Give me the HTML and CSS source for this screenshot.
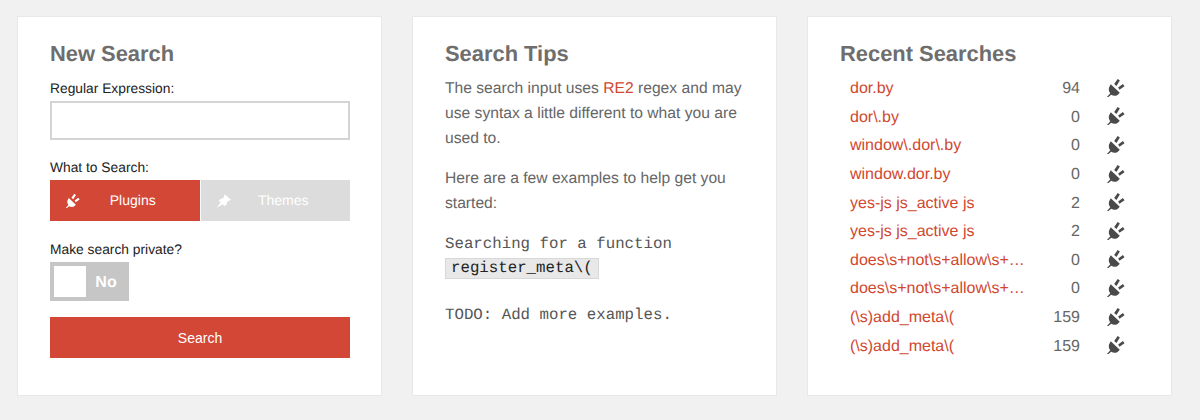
FILE: index.html
```html
<!DOCTYPE html>
<html lang="en">
<head>
  <meta charset="UTF-8">
  <title>Search</title>
  <link rel="stylesheet" href="styles.css">
</head>
<body>
  <svg class="icon-defs" width="0" height="0">
    <symbol id="plug" viewBox="0 0 20 20">
      <path d="M1 20l3.500-4c-2-2.500-2-5.500-.5-7.500l1-2 9.500 9-1.500 1.500c-2 2-5 2-7.500.5l-3.500 3z"/>
      <path d="M8.600 6.300l3.700-5.300 2.300 1.700-3.600 5.600zM12.800 10l5-3.600 1.700 2.300-5.300 3.700z"/>
    </symbol>
    <symbol id="pin" viewBox="0 0 20 20">
      <path d="M1 19.500l5-7-2.500-2.500 2.500-2 4-1.500 1.500-5 8.500 7.500-5 2.500-1 3.500-2.500 2.500-2.500-2.500z"/>
    </symbol>
  </svg>

  <div class="page">
    <!-- New search form -->
    <div class="card">
      <div class="title">New Search</div>
      <form>
        <label class="field-label" for="regex">Regular Expression:</label>
        <input class="text-input" type="text" id="regex">

        <div class="field-label what-label">What to Search:</div>
        <div class="tabs">
          <div class="tab tab-active">
            <svg class="tab-icon"><use href="#plug"/></svg>
            <span>Plugins</span>
          </div>
          <div class="tab">
            <svg class="tab-icon"><use href="#pin"/></svg>
            <span>Themes</span>
          </div>
        </div>

        <div class="field-label private-label">Make search private?</div>
        <div class="toggle">
          <div class="toggle-knob"></div>
          <div class="toggle-text">No</div>
        </div>

        <button class="search-btn" type="button">Search</button>
      </form>
    </div>

    <!-- Tips -->
    <div class="card">
      <div class="title">Search Tips</div>
      <p class="tip">The search input uses <a href="#">RE2</a> regex and may use syntax a little different to what you are used to.</p>
      <p class="tip">Here are a few examples to help get you started:</p>
      <div class="mono-block">Searching for a function<br><code>register_meta\(</code></div>
      <div class="mono-block todo">TODO: Add more examples.</div>
    </div>

    <!-- Recent searches -->
    <div class="card">
      <div class="title">Recent Searches</div>
      <div class="recent-list">
        <div class="recent-row"><a href="#">dor.by</a><span class="count">94</span><svg class="row-icon"><use href="#plug"/></svg></div>
        <div class="recent-row"><a href="#">dor\.by</a><span class="count">0</span><svg class="row-icon"><use href="#plug"/></svg></div>
        <div class="recent-row"><a href="#">window\.dor\.by</a><span class="count">0</span><svg class="row-icon"><use href="#plug"/></svg></div>
        <div class="recent-row"><a href="#">window.dor.by</a><span class="count">0</span><svg class="row-icon"><use href="#plug"/></svg></div>
        <div class="recent-row"><a href="#">yes-js js_active js</a><span class="count">2</span><svg class="row-icon"><use href="#plug"/></svg></div>
        <div class="recent-row"><a href="#">yes-js js_active js</a><span class="count">2</span><svg class="row-icon"><use href="#plug"/></svg></div>
        <div class="recent-row"><a href="#">does\s+not\s+allow\s+access</a><span class="count">0</span><svg class="row-icon"><use href="#plug"/></svg></div>
        <div class="recent-row"><a href="#">does\s+not\s+allow\s+access</a><span class="count">0</span><svg class="row-icon"><use href="#plug"/></svg></div>
        <div class="recent-row"><a href="#">(\s)add_meta\(</a><span class="count">159</span><svg class="row-icon"><use href="#plug"/></svg></div>
        <div class="recent-row"><a href="#">(\s)add_meta\(</a><span class="count">159</span><svg class="row-icon"><use href="#plug"/></svg></div>
      </div>
    </div>
  </div>
</body>
</html>
```

FILE: styles.css
```css
/* General layout */
html, body {
  margin: 0;
  padding: 0;
  height: 100%;
  overflow: hidden;
  background-color: #f1f1f1;
  font-family: "Liberation Sans", Arial, sans-serif;
  text-rendering: geometricPrecision;
  color: #666;
}

.icon-defs {
  position: absolute;
}

.page {
  display: grid;
  grid-template-columns: repeat(3, 365px);
  gap: 30px;
  padding: 16px 0 0 17px;
}

.card {
  box-sizing: border-box;
  height: 380px;
  padding: 23px 31px 0 32px;
  background-color: #fff;
  border: 1px solid #e8e8e8;
}

.title {
  font-size: 21.9px;
  line-height: 28px;
  font-weight: bold;
  color: #6e6e6e;
}

a {
  color: #d1472f;
  text-decoration: none;
}

/* Form */
.field-label {
  display: block;
  font-size: 13.8px;
  line-height: 18px;
  color: #222;
}

form .field-label:first-child {
  margin-top: 12px;
}

.text-input {
  display: block;
  box-sizing: border-box;
  width: 300px;
  height: 39px;
  margin-top: 3px;
  border: 2px solid #d4d4d4;
  background: #fff;
}

.what-label {
  margin-top: 19px;
}

.tabs {
  display: flex;
  gap: 1px;
  margin-top: 3px;
}

.tab {
  position: relative;
  flex: 1;
  box-sizing: border-box;
  height: 41px;
  padding: 0 0 2px 16px;
  display: flex;
  align-items: center;
  justify-content: center;
  background-color: #dcdcdc;
  color: #fff;
  font-size: 14px;
}

.tab-active {
  background-color: #d24735;
}

.tab-icon {
  position: absolute;
  left: 15px;
  top: 13px;
  width: 15px;
  height: 15px;
  fill: #fff;
}

.private-label {
  margin-top: 20px;
}

.toggle {
  display: flex;
  align-items: center;
  box-sizing: border-box;
  width: 79px;
  height: 39px;
  margin-top: 3px;
  padding: 4px;
  background-color: #c6c6c6;
}

.toggle-knob {
  width: 32px;
  height: 31px;
  background-color: #fff;
}

.toggle-text {
  flex: 1;
  padding: 2px 0 0 1px;
  text-align: center;
  font-size: 16px;
  font-weight: bold;
  color: #fff;
}

.search-btn {
  display: block;
  width: 300px;
  height: 41px;
  margin-top: 16px;
  border: none;
  background-color: #d24735;
  color: #fff;
  font-family: inherit;
  font-size: 14px;
}

/* Tips */
.tip {
  margin: 8px 0 0;
  font-size: 15.65px;
  line-height: 25px;
  color: #666;
}

.tip + .tip {
  margin-top: 15px;
}

.mono-block {
  margin-top: 16px;
  font-family: "Liberation Mono", "Courier New", monospace;
  font-size: 15.75px;
  line-height: 24px;
  color: #555;
}

.mono-block code {
  display: inline-block;
  padding: 0 5px;
  font-family: inherit;
  line-height: 19px;
  color: #222;
  background-color: #e8e8e8;
  border: 1px solid #d8d8d8;
}

.todo {
  margin-top: 23px;
}

/* Recent searches */
.recent-list {
  margin-top: 7px;
  padding-left: 10px;
}

.recent-row {
  display: flex;
  align-items: center;
  height: 28.6px;
  font-size: 16px;
}

.recent-row a {
  width: 181px;
  overflow: hidden;
  white-space: nowrap;
  text-overflow: ellipsis;
}

.count {
  width: 49px;
  text-align: right;
  color: #666;
}

.row-icon {
  width: 19px;
  height: 19px;
  margin: -4px 0 0 26px;
  fill: #4a4a4a;
}
```
